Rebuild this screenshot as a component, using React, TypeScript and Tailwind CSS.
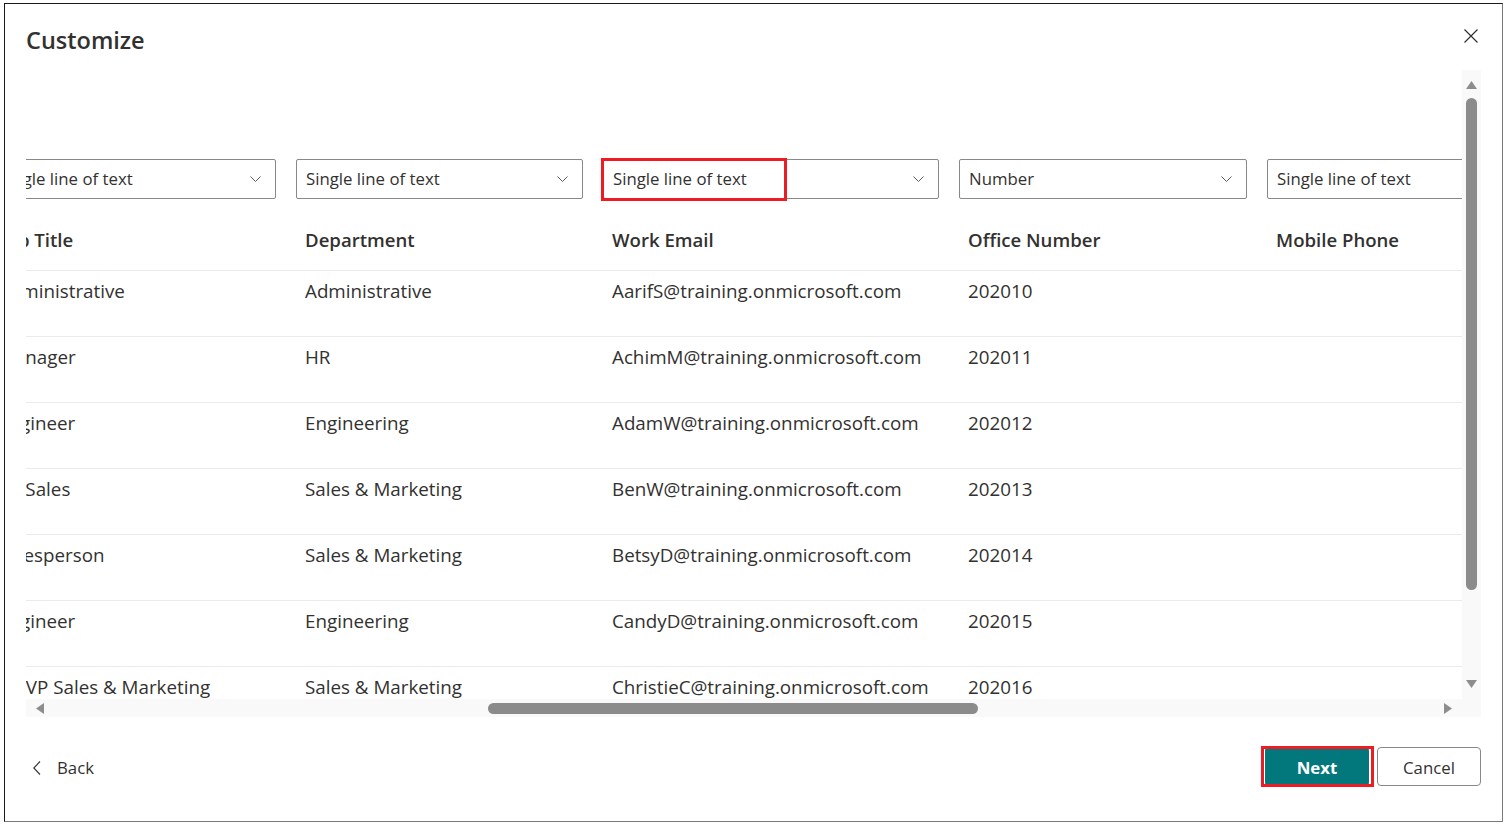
import React from "react";

const font = { fontFamily: '"Open Sans", "Noto Sans", sans-serif' };

interface Column {
  key: string;
  title: string;
  type: string;
  width: number;
}

const columns: Column[] = [
  { key: "job", title: "Job Title", type: "Single line of text", width: 307 },
  { key: "dept", title: "Department", type: "Single line of text", width: 307 },
  { key: "email", title: "Work Email", type: "Single line of text", width: 356 },
  { key: "office", title: "Office Number", type: "Number", width: 308 },
  { key: "mobile", title: "Mobile Phone", type: "Single line of text", width: 308 },
];

const rows = [
  ["Administrative", "Administrative", "AarifS@training.onmicrosoft.com", "202010", ""],
  ["Manager", "HR", "AchimM@training.onmicrosoft.com", "202011", ""],
  ["Engineer", "Engineering", "AdamW@training.onmicrosoft.com", "202012", ""],
  ["VP Sales", "Sales & Marketing", "BenW@training.onmicrosoft.com", "202013", ""],
  ["Salesperson", "Sales & Marketing", "BetsyD@training.onmicrosoft.com", "202014", ""],
  ["Engineer", "Engineering", "CandyD@training.onmicrosoft.com", "202015", ""],
  ["Sr. VP Sales & Marketing", "Sales & Marketing", "ChristieC@training.onmicrosoft.com", "202016", ""],
];

function Chevron() {
  return (
    <svg width="11" height="6" viewBox="0 0 11 6" className="shrink-0">
      <path d="M0.5 0.5 L5.5 5.5 L10.5 0.5" fill="none" stroke="#605e5c" strokeWidth="1" />
    </svg>
  );
}

function Dropdown({ label, width, highlight }: { label: string; width: number; highlight?: boolean }) {
  return (
    <div
      className="relative flex h-[40px] shrink-0 items-center justify-between rounded-[2px] border border-[#8a8886] bg-white pl-[9px] pr-[14px]"
      style={{ width }}
    >
      <span className="whitespace-nowrap text-[16.8px] text-[#323130]">{label}</span>
      <Chevron />
      {highlight && (
        <div className="pointer-events-none absolute left-[-3px] top-[-2px] h-[43px] w-[186px] border-[3px] border-[#ed1c24]" />
      )}
    </div>
  );
}

function Triangle({ dir }: { dir: "up" | "down" | "left" | "right" }) {
  const points = {
    up: "0,8 5.5,0 11,8",
    down: "0,0 11,0 5.5,8",
    left: "8,0 8,11 0,5.5",
    right: "0,0 0,11 8,5.5",
  }[dir];
  const vertical = dir === "up" || dir === "down";
  return (
    <svg width={vertical ? 11 : 8} height={vertical ? 8 : 11} viewBox={vertical ? "0 0 11 8" : "0 0 8 11"}>
      <polygon points={points} fill="#8d8d8d" />
    </svg>
  );
}

function DataGrid() {
  return (
    <div className="grid grid-cols-[1436px_19px] grid-rows-[629px_18px]">
      {/* viewport, scrolled sideways so the first column is cut */}
      <div className="overflow-hidden">
        <div className="ml-[-37px] w-max">
          <div className="flex pt-[89px]">
            {columns.map((c) => (
              <div key={c.key} className="shrink-0 pr-[20px]" style={{ width: c.width }}>
                <Dropdown label={c.type} width={c.width - 20} highlight={c.key === "email"} />
              </div>
            ))}
          </div>
          <div className="flex h-[71px] pt-[27px]">
            {columns.map((c) => (
              <div
                key={c.key}
                className={
                  "shrink-0 whitespace-nowrap text-[18.6px] font-semibold leading-[28px] text-[#323130] " +
                  (c.key === "job" ? "pl-[12px]" : "pl-[9px]")
                }
                style={{ width: c.width }}
              >
                {c.title}
              </div>
            ))}
          </div>
          {rows.map((r, i) => (
            <div key={i} className="flex h-[66px] border-t border-[#edebe9] pt-[6px]">
              {columns.map((c, j) => (
                <div
                  key={c.key}
                  className="shrink-0 overflow-hidden whitespace-nowrap pl-[9px] text-[18.8px] leading-[28px] text-[#323130]"
                  style={{ width: c.width }}
                >
                  {r[j]}
                </div>
              ))}
            </div>
          ))}
        </div>
      </div>

      {/* vertical scrollbar */}
      <div className="flex flex-col items-center bg-[#f9f9f9] pt-[11px]">
        <Triangle dir="up" />
        <div className="mt-[9px] h-[492px] w-[11px] rounded-full bg-[#8b8b8b]" />
        <div className="mt-auto mb-[11px]">
          <Triangle dir="down" />
        </div>
      </div>

      {/* horizontal scrollbar */}
      <div className="col-span-2 flex items-center bg-[#f9f9f9] pl-[10px] pr-[29px]">
        <Triangle dir="left" />
        <div className="ml-[444px] h-[11px] w-[490px] rounded-full bg-[#8b8b8b]" />
        <div className="ml-auto">
          <Triangle dir="right" />
        </div>
      </div>
    </div>
  );
}

export default function App() {
  return (
    <div className="h-[829px] w-[1508px] overflow-hidden bg-white" style={font}>
      <div className="ml-[4px] mt-[3px] flex h-[819px] w-[1499px] flex-col border-b border-l border-r border-t border-b-[#7a7a7a] border-l-[#1a1a1a] border-r-[#7a7a7a] border-t-[#1a1a1a] pl-[21px] pr-[21px]">
        {/* header */}
        <div className="flex h-[66px] items-start justify-between">
          <h1 className="pt-[20px] text-[23.5px] font-semibold leading-[32px] text-[#323130]">Customize</h1>
          <button className="mr-[2px] mt-[24px] flex h-[16px] w-[16px] items-center justify-center">
            <svg width="14" height="14" viewBox="0 0 14 14">
              <path d="M0.5 0.5 L13.5 13.5 M13.5 0.5 L0.5 13.5" stroke="#323130" strokeWidth="1.2" fill="none" />
            </svg>
          </button>
        </div>

        <DataGrid />

        {/* footer */}
        <div className="flex items-center justify-between pt-[30px]">
          <button className="flex items-center gap-[16px] pl-[7px] pt-[2px] text-[16.8px] text-[#323130]">
            <svg width="8" height="14" viewBox="0 0 8 14">
              <path d="M7 0.5 L0.8 7 L7 13.5" stroke="#323130" strokeWidth="1.1" fill="none" />
            </svg>
            <span>Back</span>
          </button>
          <div className="flex items-center gap-[8px]">
            <div className="relative">
              <button className="h-[39px] w-[104px] rounded-[4px] bg-[#03787c] pt-[2px] text-[16.8px] font-bold text-white">
                Next
              </button>
              <div className="pointer-events-none absolute left-[-4px] top-[-1px] h-[41px] w-[113px] border-[3px] border-[#ed1c24]" />
            </div>
            <button className="h-[39px] w-[104px] rounded-[4px] border border-[#8a8886] bg-white pt-[2px] text-[16.8px] text-[#323130]">
              Cancel
            </button>
          </div>
        </div>
      </div>
    </div>
  );
}
